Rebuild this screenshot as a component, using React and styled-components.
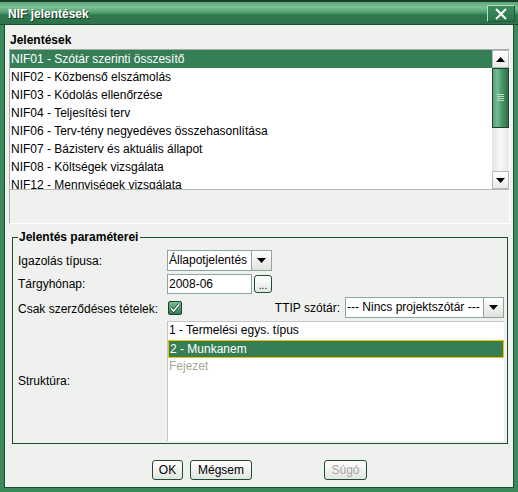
import React from "react";
import styled, {createGlobalStyle} from "styled-components";

const GlobalStyle = createGlobalStyle`
    html, body {
        margin: 0;
        padding: 0;
        background: #ffffff;
    }
    body {
        font-family: "Liberation Sans", Arial, sans-serif;
        font-size: 12px;
        color: #000;
    }
`

const Frame = styled.div`
    width: 518px;
    height: 492px;
    box-sizing: border-box;
    display: flex;
    flex-direction: column;
    background: #3a8a5b;
    padding: 0 4px 4px 4px;
`

const TitleBar = styled.div`
    height: 25px;
    margin: 0 -4px;
    box-sizing: border-box;
    display: flex;
    align-items: center;
    justify-content: space-between;
    padding: 2px 3px 0 8px;
    border-top: 2px solid #1c3d2a;
    border-bottom: 1px solid #1e4d33;
    background: linear-gradient(#5fa67b 0%, #7bbf95 25%, #4c9a6c 50%, #2f7a4e 58%, #2c7249 100%);
`

const TitleText = styled.span`
    color: #fff;
    font-weight: bold;
    font-size: 12px;
    text-shadow: 1px 1px 0 #143322;
`

const CloseButton = styled.div`
    width: 28px;
    height: 17px;
    box-sizing: border-box;
    border: 1px solid #b8dcc6;
    border-right-color: #24573a;
    border-bottom-color: #24573a;
    background: linear-gradient(#3c8e5e, #2c7449);
    display: flex;
    align-items: center;
    justify-content: center;
    margin-top: -1px;
`

const Body = styled.div`
    flex: 1;
    display: flex;
    flex-direction: column;
    background: #eff1ef;
    border: 1px solid #1e4d33;
    border-top: none;
    padding: 8px 3px 0 4px;
`

const SectionLabel = styled.div`
    font-weight: bold;
    height: 16px;
    line-height: 14px;
    padding-left: 1px;
`

const ListPanel = styled.div`
    height: 175px;
    box-sizing: border-box;
    border: 1px solid #a9aca9;
    border-right-color: #ffffff;
    border-bottom-color: #ffffff;
    display: flex;
    flex-direction: column;
`

const ListWrap = styled.div`
    height: 139px;
    display: flex;
    border-bottom: 1px solid #b4b6b4;
`

const List = styled.div`
    flex: 1;
    background: #fff;
    overflow: hidden;
`

const Row = styled.div`
    height: 18px;
    line-height: 18px;
    padding-left: 1px;
    white-space: nowrap;
    background: ${p => p.$selected ? "#367f56" : "transparent"};
    color: ${p => p.$selected ? "#fff" : p.$muted ? "#a9a897" : "#000"};
`

const ScrollBar = styled.div`
    width: 17px;
    display: flex;
    flex-direction: column;
    background: linear-gradient(90deg, #e2e4e2, #f7f8f7 50%, #e6e8e6);
`

const ArrowButton = styled.div`
    height: 18px;
    box-sizing: border-box;
    border: 1px solid #b8bab8;
    background: linear-gradient(#ffffff, #e9ebe9);
    display: flex;
    align-items: center;
    justify-content: center;
`

const Thumb = styled.div`
    height: 60px;
    box-sizing: border-box;
    border: 1px solid #1d4430;
    background: linear-gradient(90deg, #5aa57a 0%, #74ba90 30%, #4d9a6c 55%, #2f6e49 100%);
    display: flex;
    align-items: center;
    justify-content: center;
`

const Track = styled.div`
    flex: 1;
`

const Fieldset = styled.fieldset`
    margin: 6px 2px 0 3px;
    padding: 6px 3px 2px 5px;
    border: 1px solid #1e4d33;
    display: flex;
    flex-direction: column;
    min-width: 0;
`

const Legend = styled.legend`
    font-weight: bold;
    padding: 0 2px 0 1px;
    margin-left: 0;
    line-height: 14px;
`

const FormRow = styled.div`
    display: flex;
    align-items: center;
    height: ${p => p.$h || 21}px;
    margin-top: ${p => p.$mt || 0}px;
`

const Label = styled.div`
    width: 149px;
    flex: none;
`

const Combo = styled.div`
    display: flex;
    width: ${p => p.$w}px;
    height: 21px;
    box-sizing: border-box;
`

const ComboText = styled.div`
    flex: 1;
    background: #fff;
    border: 1px solid #8fa59a;
    line-height: 19px;
    padding-left: 1px;
    white-space: nowrap;
    overflow: hidden;
`

const ComboArrow = styled.div`
    width: 20px;
    box-sizing: border-box;
    border: 1px solid #8fa59a;
    border-left: none;
    background: linear-gradient(#ffffff, #dfe2df);
    display: flex;
    align-items: center;
    justify-content: center;
`

const TextInput = styled.div`
    width: 85px;
    height: 20px;
    box-sizing: border-box;
    background: #fff;
    border: 1px solid #8fa59a;
    line-height: 18px;
    padding-left: 1px;
`

const SmallButton = styled.div`
    width: 18px;
    height: 18px;
    margin-left: 2px;
    box-sizing: border-box;
    border: 1px solid #1e4d33;
    border-radius: 3px;
    background: linear-gradient(#ffffff, #e4e7e4);
    font-size: 10px;
    line-height: 20px;
    text-align: center;
`

const CheckLabel = styled.div`
    width: 150px;
    flex: none;
    padding-top: 3px;
`

const Spacer = styled.div`
    flex: 1;
`

const TtipLabel = styled.div`
    margin-right: 5px;
`

const StructRow = styled.div`
    display: flex;
    align-items: center;
    margin-top: 2px;
`

const StructList = styled.div`
    flex: 1;
    height: 120px;
    box-sizing: border-box;
    background: #fff;
    border-top: 1px solid #c3c6c3;
    border-left: 1px solid #c3c6c3;
`

const StructItem = styled(Row)`
    height: 18px;
    line-height: 17px;
    padding-left: 1px;
    box-sizing: border-box;
    border: ${p => p.$selected ? "1px solid #f0c400" : "none"};
`

const Buttons = styled.div`
    display: flex;
    margin-top: 16px;
    padding-left: 143px;
`

const Button = styled.div`
    width: ${p => p.$w}px;
    height: 20px;
    box-sizing: border-box;
    margin-left: ${p => p.$ml || 0}px;
    border: 1px solid #1e4d33;
    border-radius: 3px;
    background: linear-gradient(#ffffff, #e2e5e2);
    line-height: 18px;
    text-align: center;
    color: ${p => p.disabled ? "#a6a6a6" : "#000"};
`

const UpArrow = () => (
    <svg width="9" height="5" viewBox="0 0 9 5"><polygon points="4.5,0 9,5 0,5" fill="#000"/></svg>
)

const DownArrow = () => (
    <svg width="9" height="5" viewBox="0 0 9 5"><polygon points="0,0 9,0 4.5,5" fill="#000"/></svg>
)

const Grip = () => (
    <svg width="7" height="8" viewBox="0 0 7 8">
        {[0, 2, 4, 6].map(y => <rect key={y} x="0" y={y} width="7" height="1" fill="#b9dcc6"/>)}
    </svg>
)

const CheckBox = () => (
    <svg width="14" height="14" viewBox="0 0 14 14">
        <defs>
            <linearGradient id="cb" x1="0" y1="0" x2="0" y2="1">
                <stop offset="0" stopColor="#7cbf95"/>
                <stop offset="1" stopColor="#2f7a4e"/>
            </linearGradient>
        </defs>
        <rect x="0.5" y="0.5" width="13" height="13" rx="1.5" fill="url(#cb)" stroke="#1e3f2c"/>
        <path d="M3 7.2 L5.6 10 L11 3.5" fill="none" stroke="#1e3f2c" strokeWidth="3"/>
        <path d="M3 7.2 L5.6 10 L11 3.5" fill="none" stroke="#ffffff" strokeWidth="1.5"/>
    </svg>
)

const reports = [
    "NIF01 - Szótár szerinti összesítő",
    "NIF02 - Közbenső elszámolás",
    "NIF03 - Kódolás ellenőrzése",
    "NIF04 - Teljesítési terv",
    "NIF06 - Terv-tény negyedéves összehasonlítása",
    "NIF07 - Bázisterv és aktuális állapot",
    "NIF08 - Költségek vizsgálata",
    "NIF12 - Mennyiségek vizsgálata",
];

export default function App() {
    return (
        <>
            <GlobalStyle/>
            <Frame>
                <TitleBar>
                    <TitleText>NIF jelentések</TitleText>
                    <CloseButton>
                        <svg width="14" height="12" viewBox="0 0 14 12">
                            <path d="M2 1 L12 11 M12 1 L2 11" stroke="#fff" strokeWidth="2"/>
                        </svg>
                    </CloseButton>
                </TitleBar>
                <Body>
                    <SectionLabel>Jelentések</SectionLabel>
                    <ListPanel>
                        <ListWrap>
                            <List>
                                {reports.map((r, i) => <Row key={r} $selected={i === 0}>{r}</Row>)}
                            </List>
                            <ScrollBar>
                                <ArrowButton><UpArrow/></ArrowButton>
                                <Thumb><Grip/></Thumb>
                                <Track/>
                                <ArrowButton><DownArrow/></ArrowButton>
                            </ScrollBar>
                        </ListWrap>
                    </ListPanel>
                    <Fieldset>
                        <Legend>Jelentés paraméterei</Legend>
                        <FormRow>
                            <Label>Igazolás típusa:</Label>
                            <Combo $w={105}>
                                <ComboText>Állapotjelentés</ComboText>
                                <ComboArrow><DownArrow/></ComboArrow>
                            </Combo>
                        </FormRow>
                        <FormRow $mt={3} $h={20}>
                            <Label>Tárgyhónap:</Label>
                            <TextInput>2008-06</TextInput>
                            <SmallButton>...</SmallButton>
                        </FormRow>
                        <FormRow $mt={2} $h={23}>
                            <CheckLabel>Csak szerződéses tételek:</CheckLabel>
                            <CheckBox/>
                            <Spacer/>
                            <TtipLabel>TTIP szótár:</TtipLabel>
                            <Combo $w={159}>
                                <ComboText>--- Nincs projektszótár ---</ComboText>
                                <ComboArrow><DownArrow/></ComboArrow>
                            </Combo>
                        </FormRow>
                        <StructRow>
                            <Label>Struktúra:</Label>
                            <StructList>
                                <StructItem>1 - Termelési egys. típus</StructItem>
                                <StructItem $selected>2 - Munkanem</StructItem>
                                <StructItem $muted>Fejezet</StructItem>
                            </StructList>
                        </StructRow>
                    </Fieldset>
                    <Buttons>
                        <Button $w={31}>OK</Button>
                        <Button $w={62} $ml={7}>Mégsem</Button>
                        <Button $w={43} $ml={72} disabled>Súgó</Button>
                    </Buttons>
                </Body>
            </Frame>
        </>
    );
}
